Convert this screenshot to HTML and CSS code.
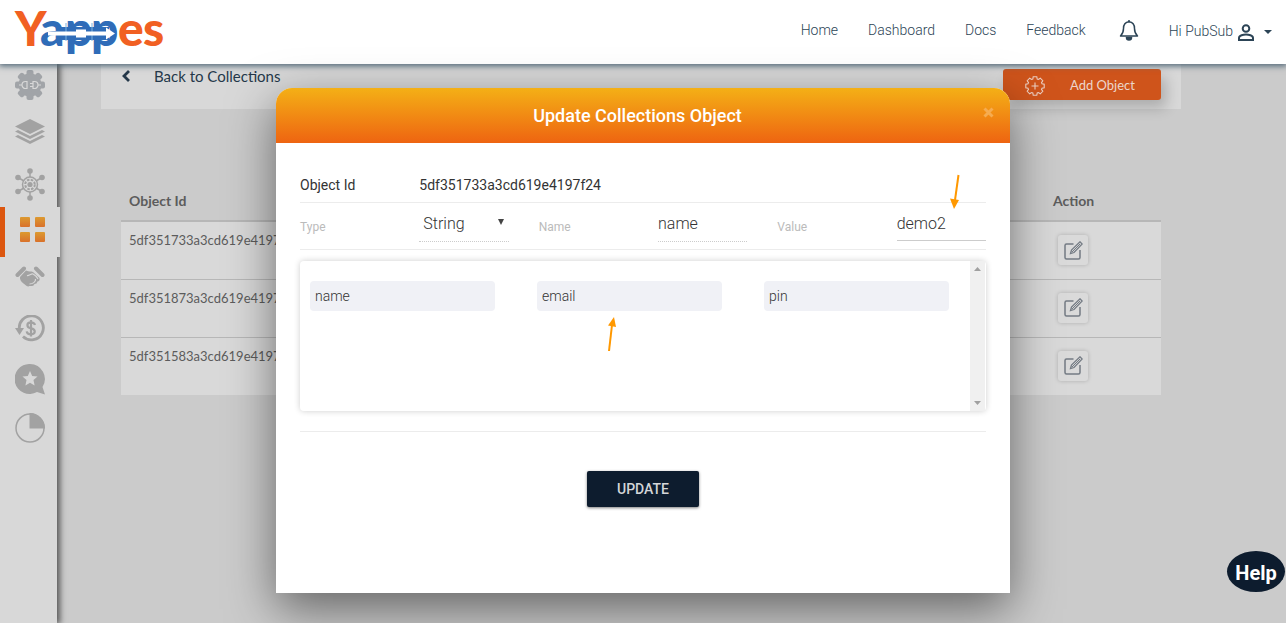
FILE: index.html
```html
<!DOCTYPE html>
<html lang="en">
<head>
<meta charset="utf-8">
<meta name="viewport" content="width=device-width, initial-scale=1">
<title>Yappes</title>
<link rel="stylesheet" href="styles.css">
</head>
<body>
<header class="topbar">
  <a class="brand" href="#" aria-label="Yappes">
    <svg width="152" height="50" viewBox="0 0 152 50">
      <g class="brand-text">
        <text class="brand-orange" x="0" y="39">Y</text>
        <text class="brand-blue" x="25" y="39">a</text>
        <text class="brand-blue" x="50" y="39">p</text>
        <text class="brand-blue" x="76" y="39">p</text>
        <text class="brand-orange" x="103" y="39">e</text>
        <text class="brand-orange" x="128" y="39">s</text>
      </g>
      <path d="M42 20h52v13H42z" fill="#2f6cb8"/>
      <path d="M51 16v18M77 16v18" stroke="#7fb4e0"/>
      <path d="M33 24.500h28v-2h10v2h20v-4l9 6-9 6v-4H71v2H61v-2H33z" fill="#fff"/>
    </svg>
  </a>
  <nav class="nav">
    <a href="#">Home</a>
    <a href="#">Dashboard</a>
    <a href="#">Docs</a>
    <a href="#">Feedback</a>
  </nav>
  <button class="plain bell" aria-label="Notifications">
    <svg width="20" height="21" viewBox="0 0 20 21" fill="none" stroke="#2c4456" stroke-width="1.500">
      <path d="M10 1.800C6.300 2.300 4.500 5 4.500 8.500c0 4-1 5.500-3 7.500h17c-2-2-3-3.500-3-7.500 0-3.500-1.800-6.200-5.500-6.700z" stroke-linejoin="round"/>
      <path d="M10 0v2"/><path d="M7.500 17.500a2.500 2.500 0 0 0 5 0z" fill="#2c4456"/>
    </svg>
  </button>
  <button class="plain user"><span>Hi PubSub</span>
    <svg width="18" height="17" viewBox="0 0 18 17" fill="none" stroke="#2c4456" stroke-width="2">
      <circle cx="9" cy="4.500" r="3.300"/><path d="M2 16v-2c0-2.600 4.500-3.500 7-3.500s7 .9 7 3.500v2z"/>
    </svg>
    <svg class="caret" width="8" height="4" viewBox="0 0 8 4"><path d="M0 0h8L4 4z" fill="#2c4456"/></svg>
  </button>
</header>

<div class="layout">
  <aside class="sidebar">
    <a href="#" aria-label="APIs"><svg width="30" height="30" viewBox="0 0 30 30"><g fill="#a1a4a8"><circle cx="15" cy="15" r="11.500"/><g id="teeth"><rect x="11.500" y="0" width="7" height="30" rx="2"/><rect x="0" y="11.500" width="30" height="7" rx="2"/></g><use href="#teeth" transform="rotate(45 15 15)"/></g><g fill="none" stroke="#d8d8d8" stroke-width="1.200"><path d="M4 15h3M12 11.500h-1.500a3.500 3.500 0 0 0 0 7H12zM18 11.500h1.500a3.500 3.500 0 0 1 0 7H18zM23 15h3M15 13.500h3M15 16.500h3"/></g></svg></a>
    <a href="#" aria-label="Layers"><svg width="30" height="26" viewBox="0 0 30 26" fill="#a2a2a2"><path d="M15 0l15 7.500L15 15 0 7.500z"/><path d="M0 12.500l3-1.500 12 6 12-6 3 1.500L15 20z"/><path d="M0 17.500l3-1.500 12 6 12-6 3 1.500L15 25z"/></svg></a>
    <a href="#" aria-label="Hub"><svg width="30" height="33" viewBox="0 0 30 33" fill="#a2a2a2"><g stroke="#a2a2a2" stroke-width="1.500"><path d="M15 3v6M15 24v6M3 9.500l6 3.500M27 9.500L21 13M3 23.500l6-3.500M27 23.500L21 20"/></g><circle cx="15" cy="3" r="2.800"/><circle cx="15" cy="30" r="2.800"/><circle cx="3" cy="9.500" r="2.800"/><circle cx="27" cy="9.500" r="2.800"/><circle cx="3" cy="23.500" r="2.800"/><circle cx="27" cy="23.500" r="2.800"/><g fill="none" stroke="#a2a2a2"><circle cx="15" cy="16.500" r="7.500" stroke-width="1.500"/><circle cx="15" cy="16.500" r="4.800" stroke-width="2" stroke-dasharray="2.500 1.300"/></g><circle cx="15" cy="16.500" r="2.600"/></svg></a>
    <a href="#" class="active" aria-label="Collections"><svg width="25" height="25" viewBox="0 0 25 25"><defs><linearGradient id="tile" x1="0" y1="0" x2="0" y2="1"><stop offset="0" stop-color="#dc9a30"/><stop offset="1" stop-color="#d9712b"/></linearGradient></defs><g fill="url(#tile)"><rect width="10" height="10" rx="1"/><rect x="15" width="10" height="10" rx="1"/><rect y="15" width="10" height="10" rx="1"/><rect x="15" y="15" width="10" height="10" rx="1"/></g></svg></a>
    <a href="#" aria-label="Partners"><svg width="30" height="21" viewBox="0 0 30 21"><g stroke="#a2a2a2" stroke-width="4" stroke-linecap="round"><path d="M2.500 9L9 2.500M27.500 9L21 2.500"/></g><path d="M5 11l6-6.500c3 1.500 5 .5 7 1.500l6.500 6c.5 2-.5 3.500-2 3.500l-1 2-2 .5-1 1.500c-2 1-4 0-5 1-2 0-3-2-5-3-2-1.500-4-4-3.500-6.500z" fill="#a2a2a2"/><path d="M12 9.500c2 .5 4-2 6-1.500 2 1 4 3 5 5M14.500 18c3 0 6.500-2 6-5" fill="none" stroke="#d8d8d8" stroke-width="1.200"/></svg></a>
    <a href="#" aria-label="Billing"><svg width="30" height="27" viewBox="0 0 30 27" fill="none" stroke="#a2a2a2"><path d="M4.500 15A12 12 0 1 1 8 21.500" stroke-width="2.800"/><path d="M0 13h9l-4.500 7z" fill="#a2a2a2" stroke="none"/><path d="M20 10c-.5-2-2-2.700-4-2.700-4.800 0-4.800 5.200 0 6 5 .8 5 6 0 6-2.500 0-4-1-4.300-3M16 5v16.500" stroke-width="2.200"/></svg></a>
    <a href="#" aria-label="Reviews"><svg width="30" height="31" viewBox="0 0 30 31"><path d="M15 0a15 15 0 0 1 12.500 23L30 30.500 22 28A15 15 0 1 1 15 0z" fill="#a2a2a2"/><path d="M15 7l2.200 4.900 5.300.6-4 3.600 1.100 5.300-4.600-2.700-4.600 2.700 1.100-5.300-4-3.600 5.300-.6z" fill="#d8d8d8"/></svg></a>
    <a href="#" aria-label="Usage"><svg width="30" height="30" viewBox="0 0 30 30"><circle cx="15" cy="15" r="14" fill="none" stroke="#a2a2a2" stroke-width="1.500"/><path d="M14.500 0A15 15 0 0 1 30 15.500H14.500z" fill="#a2a2a2"/></svg></a>
  </aside>

  <main class="content">
    <div class="toolbar">
      <a class="back" href="#"><svg width="9" height="12" viewBox="0 0 9 12" fill="none" stroke="#25384a" stroke-width="2.800"><path d="M8 1L3 6l5 5"/></svg>Back to Collections</a>
      <button class="add"><svg width="20" height="20" viewBox="0 0 20 20" fill="none" stroke="#ecd0c4" stroke-width="1.100"><path d="M8.200 .8h3.600l.4 2.200 1.200.5 1.900-1.300 2.500 2.500-1.300 1.900.5 1.200 2.200.4v3.600l-2.200.4-.5 1.200 1.300 1.900-2.500 2.500-1.900-1.300-1.200.5-.4 2.200H8.200L7.800 17l-1.200-.5-1.900 1.300-2.500-2.500 1.300-1.900-.5-1.200-2.200-.4V8.200L3 7.800l.5-1.200-1.300-1.900 2.500-2.500 1.900 1.300L7.800 3z"/><path d="M10 6.500v7M6.500 10h7"/></svg><span>Add Object</span></button>
    </div>
    <table class="objects">
      <thead><tr><th>Object Id</th><th class="col-action">Action</th></tr></thead>
      <tbody>
        <tr><td>5df351733a3cd619e4197f24</td><td class="edit-cell"><button class="edit" aria-label="Edit"><svg width="19" height="19" viewBox="0 0 19 19" fill="none" stroke="#747b84" stroke-width="1.500"><path d="M9.500 3H2.500Q1 3 1 4.500v12Q1 18 2.500 18h12q1.500 0 1.500-1.500V9"/><path d="M6.500 12.500l1-3.500L16 .8 18.200 3 10 11.500z" stroke-width="1.300"/><path d="M8 11l8-8" stroke-width="1"/></svg></button></td></tr>
        <tr><td>5df351873a3cd619e4197f25</td><td class="edit-cell"><button class="edit" aria-label="Edit"><svg width="19" height="19" viewBox="0 0 19 19" fill="none" stroke="#747b84" stroke-width="1.500"><path d="M9.500 3H2.500Q1 3 1 4.500v12Q1 18 2.500 18h12q1.500 0 1.500-1.500V9"/><path d="M6.500 12.500l1-3.500L16 .8 18.200 3 10 11.500z" stroke-width="1.300"/><path d="M8 11l8-8" stroke-width="1"/></svg></button></td></tr>
        <tr><td>5df351583a3cd619e4197f23</td><td class="edit-cell"><button class="edit" aria-label="Edit"><svg width="19" height="19" viewBox="0 0 19 19" fill="none" stroke="#747b84" stroke-width="1.500"><path d="M9.500 3H2.500Q1 3 1 4.500v12Q1 18 2.500 18h12q1.500 0 1.500-1.500V9"/><path d="M6.500 12.500l1-3.500L16 .8 18.200 3 10 11.500z" stroke-width="1.300"/><path d="M8 11l8-8" stroke-width="1"/></svg></button></td></tr>
      </tbody>
    </table>
  </main>
</div>

<div class="overlay">
  <section class="modal" role="dialog" aria-labelledby="modal-title">
    <header class="modal-head">
      <h2 id="modal-title">Update Collections Object</h2>
      <button class="plain close" aria-label="Close"><svg width="11" height="11" viewBox="0 0 11 11" stroke="#f6ac50" stroke-width="3"><path d="M1.500 1.500l8 8M9.500 1.500l-8 8"/></svg></button>
    </header>
    <form class="modal-body">
      <div class="row id-row"><span>Object Id</span><span class="id-value">5df351733a3cd619e4197f24</span></div>
      <div class="row field-row">
        <label for="type">Type</label>
        <span class="select"><select id="type"><option>String</option></select><svg width="6" height="6" viewBox="0 0 6 6"><path d="M0 0h6L3 6z" fill="#444"/></svg></span>
        <label for="name">Name</label>
        <input id="name" class="dotted" type="text" value="name">
        <label for="value">Value</label>
        <input id="value" type="text" value="demo2">
      </div>
      <div class="keys">
        <div class="key-list">
          <input type="text" aria-label="Key 1" value="name">
          <input type="text" aria-label="Key 2" value="email">
          <input type="text" aria-label="Key 3" value="pin">
        </div>
        <div class="track">
          <svg width="7" height="4" viewBox="0 0 7 4"><path d="M0 4h7L3.500 0z" fill="#a0a0a0"/></svg>
          <svg width="7" height="4" viewBox="0 0 7 4"><path d="M0 0h7L3.500 4z" fill="#a0a0a0"/></svg>
        </div>
      </div>
      <div class="actions"><button class="update" type="button">UPDATE</button></div>
    </form>
    <svg class="arrow arrow-value" width="12" height="36" viewBox="0 0 12 36"><path d="M8.500 1L5 26" stroke="#ff9800" stroke-width="2"/><path d="M0 24.500l9 1.500-5 9z" fill="#ff9800"/></svg>
    <svg class="arrow arrow-key" width="12" height="36" viewBox="0 0 12 36"><path d="M2 35L5 9" stroke="#ff9800" stroke-width="2"/><path d="M7 1l2 10-8-1.500z" fill="#ff9800"/></svg>
  </section>
</div>
<button class="help">Help</button>
</body>
</html>
```
FILE: styles.css
```css
* { box-sizing: border-box; }
body {
  margin: 0;
  height: 100vh;
  overflow: hidden;
  display: flex;
  flex-direction: column;
  background: #cbcbcb;
  color: #333;
  font-family: Roboto, "Liberation Sans", sans-serif;
  font-size: 14px;
}
a { color: inherit; text-decoration: none; }
button, input, select { font: inherit; color: inherit; margin: 0; }
svg { display: block; flex: none; }
.plain { padding: 0; border: 0; background: none; }

/* top bar */
.topbar {
  position: relative;
  z-index: 2;
  flex: none;
  display: flex;
  align-items: center;
  height: 64px;
  padding: 0 14px 0 15px;
  background: #fff;
  box-shadow: 0 1px 6px 1px #4f6676;
  color: #2c4456;
  font-weight: 300;
}
.brand { margin-right: auto; }
.brand svg { overflow: visible; }
.brand-text { font: 900 48px Lato, sans-serif; }
.brand-orange { fill: #f16022; }
.brand-blue { fill: #2f6cb8; }
.nav { display: flex; gap: 30px; padding-bottom: 4px; }
.bell { margin: 0 30px 4px 33px; }
.user { display: flex; align-items: center; gap: 4px; }
.user span { padding-bottom: 2px; }
.caret { margin-left: 5px; }

/* page */
.layout { flex: 1; display: flex; margin-top: -4px; }
.sidebar {
  flex: none;
  width: 57px;
  background: #d8d8d8;
  box-shadow: 2px 0 6px 1px #555;
}
.sidebar a {
  display: flex;
  justify-content: center;
  align-items: flex-start;
  height: 49px;
  padding: 10px 0 0 3px;
}
.sidebar .active {
  width: 60px;
  height: 50px;
  margin-bottom: -1px;
  padding: 10px 0 0;
  border-left: 5px solid #dc560f;
  background: #d8d8d8;
}
.content {
  flex: 1;
  min-width: 0;
  padding: 0 105px 0 44px;
  font-family: Lato, "Liberation Sans", sans-serif;
}
.toolbar {
  display: flex;
  align-items: center;
  justify-content: space-between;
  height: 49px;
  padding: 0 20px;
  background: #d8d8d8;
}
.back { display: flex; align-items: center; gap: 24px; padding-bottom: 18px; font-size: 15px; color: #25384a; }
.add {
  display: flex;
  align-items: center;
  gap: 25px;
  width: 158px;
  height: 31px;
  padding: 2px 22px 0;
  border: 0;
  border-radius: 3px;
  background: #cf541b;
  box-shadow: 5px 8px 14px rgba(0, 0, 0, .2);
  color: #ecd6cc;
  font-size: 13px;
}
.add span { padding-bottom: 2px; }
.objects { width: calc(100% - 40px); margin: 72px 20px 0; border-collapse: collapse; color: #5c5c5c; }
.objects th { height: 40px; padding: 0 8px; text-align: left; font-weight: 700; border-bottom: 2px solid #b7b7b7; }
.objects td { height: 58px; padding: 10px 8px 0; vertical-align: top; background: #d9d9d9; font-size: 13px; }
.objects .edit-cell { padding-top: 13px; }
.objects tr + tr td { border-top: 1px solid #b7b7b7; }
.col-action { width: 116px; }
.edit {
  display: flex;
  align-items: center;
  justify-content: center;
  width: 30px;
  height: 30px;
  margin-left: 5px;
  padding: 0;
  border: 0;
  border-radius: 3px;
  background: #dadada;
  box-shadow: 0 0 4px rgba(0, 0, 0, .2);
}

/* dialog */
.overlay { position: absolute; inset: 0; z-index: 3; display: flex; justify-content: center; align-items: flex-start; padding-top: 88px; overflow: hidden; pointer-events: none; }
.modal {
  position: relative;
  width: 734px;
  max-width: 100%;
  border-radius: 16px 16px 0 0;
  background: #fff;
  box-shadow: 0 16px 48px rgba(0, 0, 0, .5);
  pointer-events: auto;
}
.modal-head {
  display: flex;
  align-items: center;
  height: 55px;
  padding: 0 16px 0 0;
  border-radius: 16px 16px 0 0;
  background: linear-gradient(#f4b016, #ee6411);
  color: #fff;
}
.modal-head h2 { flex: 1; margin: 0; padding-left: 16px; text-align: center; font-size: 18px; font-weight: 500; }
.close { padding-bottom: 6px; }
.modal-body { padding: 24px 24px 86px; }
.row { display: grid; grid-template-columns: repeat(6, 1fr); column-gap: 30px; border-bottom: 1px solid #ececec; }
.id-row { height: 36px; align-items: center; }
.id-value { grid-column: span 5; }
.field-row { height: 47px; align-items: start; }
.field-row label { padding-top: 17px; font-size: 12px; color: #bbb; }
.field-row input, .field-row select {
  width: 100%;
  min-width: 0;
  height: 38px;
  padding: 4px 0 0;
  border: 0;
  border-bottom: 1px solid #ccc;
  border-radius: 0;
  background: none;
  font-size: 16px;
  font-weight: 300;
}
.field-row .dotted, .field-row select { height: 39px; padding-top: 3px; border-bottom-style: dotted; }
.field-row select { appearance: none; padding-left: 4px; }
.select { display: grid; align-items: center; }
.select > * { grid-area: 1 / 1; }
.select svg { justify-self: end; margin: 0 5px 2px 0; }
.keys {
  display: flex;
  height: 150px;
  margin-top: 11px;
  padding-right: 1px;
  border-radius: 4px;
  box-shadow: 0 0 6px rgba(0, 0, 0, .2);
}
.key-list { flex: 1; display: grid; grid-template-columns: repeat(3, 1fr); align-items: start; column-gap: 42px; padding: 20px 21px 0 10px; }
.key-list input { width: 100%; min-width: 0; height: 30px; padding: 0 5px; border: 0; border-radius: 4px; background: #f0f1f6; font-weight: 300; }
.track { display: flex; flex-direction: column; justify-content: space-between; align-items: center; width: 15px; padding: 6px 0; background: #f0f0f0; }
.actions { display: flex; justify-content: center; margin-top: 20px; padding-top: 39px; border-top: 1px solid #ececec; }
.update {
  width: 112px;
  height: 36px;
  border: 0;
  border-radius: 2px;
  background: #0d1c2e;
  box-shadow: 0 1px 3px rgba(0, 0, 0, .5);
  color: #d4d6d9;
  font-weight: 500;
}
.arrow { position: absolute; }
.arrow-value { left: 674px; top: 86px; }
.arrow-key { left: 331px; top: 228px; }

.help {
  position: absolute;
  right: 1px;
  bottom: 31px;
  z-index: 4;
  width: 58px;
  height: 41px;
  padding: 3px 0 0;
  border: 0;
  border-radius: 50%;
  background: #0d1c2e;
  color: #fff;
  font-size: 20px;
  font-weight: 700;
}
```
